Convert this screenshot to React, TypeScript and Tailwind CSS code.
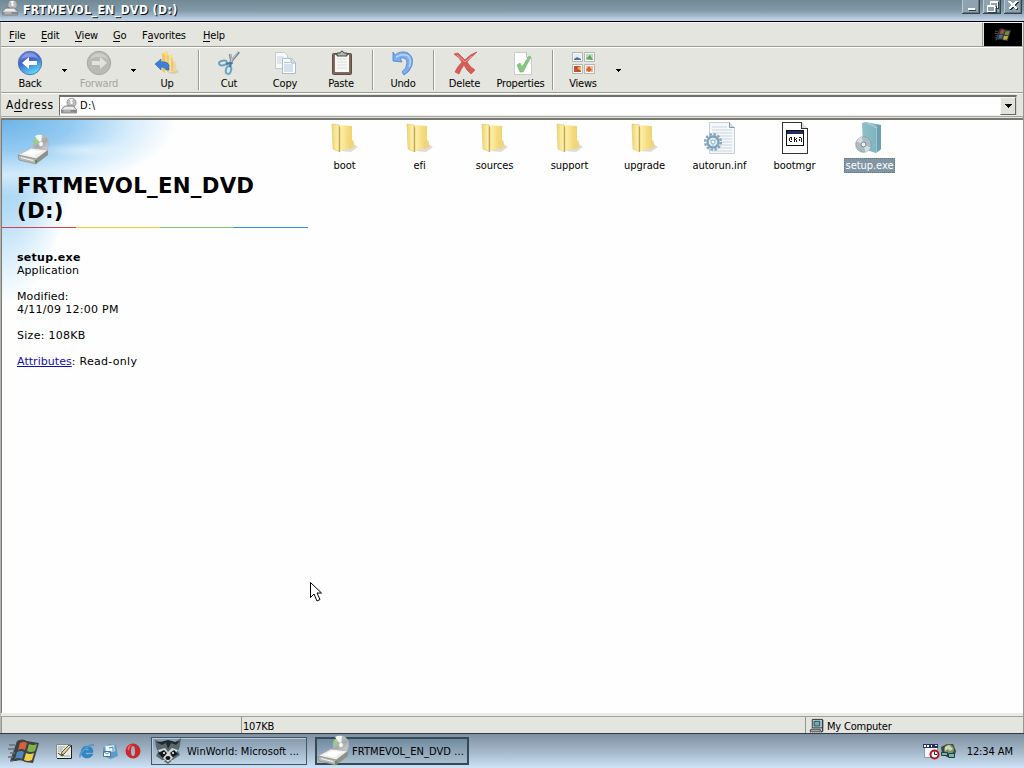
import React from "react";

interface IconProps {
  className?: string;
}

interface ToolItem {
  id: string;
  text?: string;
  icon?: React.ReactNode;
  kind: "button" | "arrow" | "separator";
  width: string;
  disabled?: boolean;
}

interface FileItem {
  id: string;
  name: string;
  icon: React.ReactNode;
  selected?: boolean;
}

const DriveIcon = ({ className }: IconProps) => (
  <svg viewBox="0 0 32 32" className={className}>
    <defs>
      <linearGradient id="disc" x1="0" y1="0" x2="1" y2="1">
        <stop offset="0" stopColor="#d8dcd8" />
        <stop offset=".5" stopColor="#a4a8a8" />
        <stop offset="1" stopColor="#e4e6e6" />
      </linearGradient>
    </defs>
    <ellipse cx="24" cy="10" rx="7.6" ry="9" fill="url(#disc)" stroke="#b2b8ba" strokeWidth=".7" transform="rotate(12 24 10)" />
    <path d="M24 10 18 2a9 9 0 0 1 7-1z" fill="#f5f7f5" />
    <path d="M24 10 16 9l1-5z" fill="#8ed46f" opacity=".8" />
    <ellipse cx="24" cy="10" rx="2.3" ry="2.6" fill="#f8f8f8" stroke="#aaa" strokeWidth=".6" />
    <path d="M1 21 14 14l17 2-12 9z" fill="#efefed" stroke="#b0b0ae" strokeWidth=".7" />
    <path d="m6 20 9-4 10 1-8 5z" fill="#fff" />
    <path d="m1 21 18 4v5L2 26z" fill="#b7b8b5" stroke="#8a8a86" strokeWidth=".7" />
    <path d="m19 25 12-9v5l-12 9z" fill="#8d908b" />
    <path d="m4 23.500 12 3" stroke="#f3f3f3" strokeWidth="1.200" />
    <path d="M19 26v3" stroke="#4d8a3b" strokeWidth="1.500" />
  </svg>
);

const SmallDriveIcon = ({ className }: IconProps) => (
  <svg viewBox="0 0 16 16" className={className}>
    <circle cx="10.5" cy="4.800" r="4.600" fill="#bbbdbd" stroke="#858789" strokeWidth=".7" />
    <path d="M10.500 4.800 8 1h4z" fill="#f4f4f4" />
    <circle cx="10.500" cy="4.800" r="1.200" fill="#fff" />
    <path d="M3.500 8h9l3 3.500v3.500H.5v-3.500z" fill="#d0d0ce" stroke="#737575" strokeWidth=".8" />
    <path d="M4 9h8l1.500 2h-11z" fill="#ececea" />
    <path d="M1 12h14v2.500H1z" fill="#868a8b" />
    <path d="M2.500 13h7" stroke="#eee" strokeWidth=".8" />
  </svg>
);

const RoundArrowIcon = ({ forward }: { forward?: boolean }) => (
  <svg viewBox="0 0 26 26" className="size-[26px]">
    <defs>
      <linearGradient id="backBall" x1="0" y1="0" x2=".4" y2="1">
        <stop offset="0" stopColor="#8288df" />
        <stop offset=".5" stopColor="#3f66c9" />
        <stop offset="1" stopColor="#5bd2f6" />
      </linearGradient>
    </defs>
    <circle cx="13" cy="13" r="11.700" fill={forward ? "#b9b9b6" : "url(#backBall)"} stroke={forward ? "#a8a8a5" : "#5675b2"} strokeWidth="1" />
    <path d="M4 9a10 10 0 0 1 18 0q-9-4-18 0z" fill="#fff" opacity=".28" />
    <path d="m5 13 7-6v4h8v4h-8v4z" fill={forward ? "#e2e2dd" : "#fff"} transform={forward ? "rotate(180 13 13)" : undefined} />
  </svg>
);

const UpIcon = () => (
  <svg viewBox="0 0 26 26" className="size-[26px]">
    <path d="m20 17 5 5-5 2-6-1z" fill="#c9b8a0" opacity=".6" />
    <path d="m8 3 6-2v17l-4 4-2-2z" fill="#fadb8a" />
    <path d="m8 3 3 2v18l-3-2z" fill="#f2c565" />
    <path d="m14 6 5-2v18h-5z" fill="#fbe094" />
    <path d="m18 12 3-1 2 10-5 1z" fill="#f0d49a" />
    <path d="M14 5v17M18 8v13" stroke="#d9a95c" strokeWidth=".8" />
    <path d="m1 14 6-5v3q6-1 8 3v5h-3q-1-3-5-3v3z" fill="#3f80d6" stroke="#2c64b4" strokeWidth=".6" />
  </svg>
);

const CutIcon = () => (
  <svg viewBox="0 0 26 26" className="size-[26px]" fill="none">
    <path d="m23 2-10 12M14 4l2 10" stroke="#7a8791" strokeWidth="2.600" />
    <path d="m22 2-9 12M14.500 4l1.500 9" stroke="#c6d0d6" strokeWidth="1" />
    <ellipse cx="7" cy="13" rx="4" ry="2.300" transform="rotate(-12 7 13)" stroke="#6d9fbe" strokeWidth="2" />
    <ellipse cx="12.500" cy="20" rx="2.600" ry="4" transform="rotate(15 12.500 20)" stroke="#6ba5c9" strokeWidth="2" />
    <path d="m10 14 5-1-1 4" stroke="#44789f" strokeWidth="2" />
  </svg>
);

const CopyIcon = () => (
  <svg viewBox="0 0 26 26" className="size-[26px]">
    <path d="M3.500 2.500h9l3 3v13h-12z" fill="#f8f9fa" stroke="#c3cad0" />
    <path d="M5 7h7M5 9h5M5 11h5M5 13h5" stroke="#ccd2d8" />
    <path d="M10.500 8.500h9l4 4v11h-13z" fill="#fbfcfd" stroke="#adbbc7" />
    <path d="M19 8.500V13h4.500" fill="#dce7ee" stroke="#9eb3c3" />
    <path d="M12 12.500h6M12 15h9M12 17h9M12 19h9M12 21h9" stroke="#aec5d8" />
  </svg>
);

const PasteIcon = () => (
  <svg viewBox="0 0 26 26" className="size-[26px]">
    <rect x="4.500" y="3.500" width="19" height="21" rx="1" fill="#806a5e" stroke="#5b4d46" />
    <path d="M7 5h14v17H7z" fill="#f8f8f6" />
    <path d="M9 9h10M9 12h10M9 15h10M9 18h10" stroke="#dcdcdc" />
    <path d="M9 5V3h3q2-4 4 0h3v3H9z" fill="#b2b4b0" stroke="#434847" />
  </svg>
);

const UndoIcon = () => (
  <svg viewBox="0 0 26 26" className="size-[26px]">
    <path d="m3 2 2 3q6-5 13-2 6 4 4 12-2 7-8 10l-2-3q5-4 5-9 0-6-7-5l2 4-9-1z" fill="#7caded" stroke="#5189d6" strokeWidth=".9" />
    <path d="M6 7q7-4 12-1 4 4 1 11" fill="none" stroke="#bad5fa" strokeWidth="1.500" />
  </svg>
);

const DeleteIcon = () => (
  <svg viewBox="0 0 26 26" className="size-[26px]">
    <path d="m2 4 4-1 7 7Q18 4 25 2q-6 5-10 10 3 5 8 8l-4 4q-5-4-7-9-3 4-5 9l-4-2q2-5 7-10-3-5-8-8z" fill="#d65c58" stroke="#c2524d" strokeWidth=".7" />
    <path d="m5 5 8 7 7-6" fill="none" stroke="#efa19a" strokeWidth="1" />
  </svg>
);

const PropertiesIcon = () => (
  <svg viewBox="0 0 26 26" className="size-[26px]">
    <path d="M6.500 2.500h12l5 5v17h-17z" fill="#fff" stroke="#c9cec9" />
    <path d="M18.500 2.500v5h5" fill="#e6ece6" stroke="#b9c1b9" />
    <path d="m9 15 3-2 2 4 7-11 2 1-8 15h-3z" fill="#86c781" stroke="#6bb266" strokeWidth=".6" />
  </svg>
);

const ViewsIcon = () => (
  <svg viewBox="0 0 26 26" className="size-[26px]">
    <path d="M2.500 2.500h10v9h-10zM14.500 2.500h10v9h-10zM2.500 14.500h10v9h-10zM14.500 14.500h10v9h-10z" fill="#f5f5f3" stroke="#b5b5b5" />
    <path d="M4 4h7v5H4z" fill="#e3edf6" />
    <path d="m4 9 3-2 4 2v1H4z" fill="#4f739f" />
    <path d="M16 4h7v6h-7z" fill="#b7dcb4" />
    <path d="m16 9 4-4 3 5z" fill="#5fa06b" />
    <path d="M4 16h7v6H4z" fill="#c04f35" />
    <path d="m7 18 4-2v5z" fill="#efb54c" />
    <path d="M16 16h7v6h-7z" fill="#edbf85" />
    <path d="m16 20 3-4 3 4-3 2z" fill="#d1604d" />
  </svg>
);

const FolderIcon = () => (
  <svg viewBox="0 0 32 32" className="size-8">
    <defs>
      <linearGradient id="folderFront">
        <stop offset="0" stopColor="#f0d46f" />
        <stop offset=".7" stopColor="#fdf0ae" />
        <stop offset="1" stopColor="#d8b755" />
      </linearGradient>
      <linearGradient id="folderBack">
        <stop offset="0" stopColor="#fff3ae" />
        <stop offset="1" stopColor="#f0d36e" />
      </linearGradient>
    </defs>
    <path d="m21 20 8 5-7 5-10-1z" fill="#a19d9c" opacity=".35" />
    <path d="m10 3 13 1v22l-13 3z" fill="url(#folderBack)" />
    <path d="M18 5v21M20 5v21" stroke="#f4d97a" />
    <path d="m20 20 4-2 2 7-6 2z" fill="#efd57f" />
    <path d="m3 2 7 1 1 3v24l-7-3z" fill="url(#folderFront)" stroke="#dec674" strokeWidth=".6" />
    <path d="M10.500 5v25" stroke="#b99f52" strokeWidth=".8" />
  </svg>
);

const InfIcon = () => (
  <svg viewBox="0 0 32 32" className="size-8">
    <path d="M5.500.500h20l5 5v26h-25z" fill="#f4f8fb" stroke="#c6d0d7" />
    <path d="M25.500.500v5h5" fill="#d8e1e8" stroke="#8a969f" />
    <path d="M8 5h15M8 8h20M8 11h20M8 14h20M8 17h20M8 20h20M8 23h20M8 26h20M8 29h20" stroke="#cbd6de" />
    <circle cx="9" cy="20" r="7.800" fill="none" stroke="#86a7bd" strokeWidth="2.500" strokeDasharray="2.500 1.600" />
    <circle cx="9" cy="20" r="5.500" fill="#e3f0f7" stroke="#7da2bb" strokeWidth="2.300" />
    <path d="m9 20-4-3M9 20l4-3M9 20v5" stroke="#a5c2d3" />
    <circle cx="9" cy="20" r="2" fill="#fff" stroke="#8bb0c8" />
  </svg>
);

const BootIcon = () => (
  <svg viewBox="0 0 32 32" className="size-8" shapeRendering="crispEdges">
    <path d="M3.500.500h19l6 6v25h-25z" fill="#fff" stroke="#333" />
    <path d="M22.500.500v6h6" fill="#ddd" stroke="#333" />
    <path d="M7.500 8.500h17v15h-17z" fill="#fff" stroke="#111" />
    <path d="M8 9h16v3H8z" fill="#202b67" />
    <path d="M11 15h2v1h-2zM10 16h1v3h-1zM12 16h1v2h-1zM11 19h2v1h-2zM15 15h1v5h-1zM17 16h1v1h-1zM16 17h1v1h-1zM17 18h1v2h-1zM20 15h2v1h-2zM22 16h1v4h-1zM20 17h1v2h-1z" fill="#111" />
  </svg>
);

const SetupIcon = () => (
  <svg viewBox="0 0 32 32" className="size-8">
    <defs>
      <linearGradient id="setupBox">
        <stop offset="0" stopColor="#8ec0ca" />
        <stop offset=".75" stopColor="#80b4be" />
        <stop offset="1" stopColor="#58909c" />
      </linearGradient>
    </defs>
    <path d="m8 1 4-1 15 3v24l-5 4-13-4z" fill="url(#setupBox)" />
    <path d="m12 0 11 6v24" fill="none" stroke="#a8d6dd" strokeWidth="1.200" />
    <path d="m23 6 4-3v24l-4 3z" fill="#6ba0ac" />
    <circle cx="9.500" cy="22.500" r="7.800" fill="#acbac3" stroke="#8598a4" strokeWidth=".7" />
    <path d="m9.500 22.500-7-3a8 8 0 0 1 5-5zM9.500 22.500l7 3a8 8 0 0 1-5 5z" fill="#d6dce0" />
    <circle cx="9.500" cy="22.500" r="2.400" fill="#eef1f3" stroke="#7c8990" />
  </svg>
);

const WindowsFlag = ({ className }: IconProps) => (
  <svg viewBox="0 0 34 28" className={className}>
    <path d="M9 4q5-3 10 0l12 2-6 20-8-1q-4-3-9-1l-6 0z" fill="#3d4244" />
    <path d="M1 8h6M0 12h7M2 16h5M0 20h5M2 24h3" stroke="#667078" strokeWidth="1.500" />
    <path d="M12 6q4-2 7 0l-2 7q-4-2-7 0z" fill="#d9603c" />
    <path d="M21 7q4 2 8 0l-2 7q-4 2-8 0z" fill="#7fb24d" />
    <path d="M9 15q4-2 7 0l-2 7q-4-2-7 0z" fill="#4f86bb" />
    <path d="M18 16q4 2 8 0l-2 7q-4 2-8 0z" fill="#ecd04c" />
  </svg>
);

const RaccoonIcon = () => (
  <svg viewBox="0 0 28 28" className="size-7 shrink-0">
    <path d="m1 3 7 2q6-3 13 0l6-4-1 8-2 5 2 4-6 4-6 5-6-4-6-4 2-4-2-5z" fill="#59686f" />
    <path d="m2 5 6 3 4-2 2 6 3-6 5 2 4-4-5 1-7-2-8 2z" fill="#20292f" />
    <path d="m4 13 7-2 3 4 4-4 6 2-2 3-8 2-8-2z" fill="#cdd6d8" />
    <path d="m4 16 6-3 4 4-5 4zM16 16l4-3 4 4-5 3z" fill="#15191c" />
    <path d="m9 21 5-6 5 6-5 4z" fill="#d5dadb" />
    <circle cx="10" cy="16" r="1" fill="#fff" />
    <circle cx="19" cy="16" r="1" fill="#fff" />
    <ellipse cx="14" cy="21" rx="2.500" ry="2" fill="#111" />
    <path d="m8 24 3-1M20 24l-3-1" stroke="#c9d3d5" />
  </svg>
);

const NotePadIcon = () => (
  <svg viewBox="0 0 16 16" className="size-4">
    <path d="M.5 1.500h15v14H.5z" fill="#e9ece0" />
    <path d="M.5 15V1.500H15" fill="none" stroke="#7c8a92" />
    <path d="M15.500 2v13.500H1" fill="none" stroke="#182028" />
    <path d="M2 4h7M2 6h5M2 8h4M8 13h6" stroke="#a1aaa0" />
    <path d="m5 12 1-3 7-7 2 1-7 8z" fill="#e2d492" stroke="#333" strokeWidth=".8" />
    <path d="m2 10 4 3 2-1" fill="none" stroke="#333" />
  </svg>
);

const ExplorerIcon = () => (
  <svg viewBox="0 0 16 16" className="size-4">
    <path fillRule="evenodd" d="M14 9.500H6q1 3 4 1.500h4q-2 4.500-7 4-5-1-5-6 1-6 6-6 6 0 6 6.500zM6 7.500h4.500q-2-4-4.500 0" fill="#2f88c8" stroke="#1c6dad" strokeWidth=".4" />
    <path d="M1 14.500Q-1 10 7 4q8-5 8-1-1-2-7 2-7 6-7 9.500z" fill="#5ba7db" stroke="#3a88c2" strokeWidth=".5" />
  </svg>
);

const OutlookIcon = () => (
  <svg viewBox="0 0 16 16" className="size-4">
    <path d="m1 5 6-4 7 1 2 11-7 3-8-3z" fill="#6098c8" />
    <path d="m3 3 9-1 1 6-9 2z" fill="#eff6fa" stroke="#90bad6" strokeWidth=".6" />
    <path d="M1.500 8.500h7v5h-7z" fill="#fff" stroke="#4375a7" />
    <path d="m2 9 3 2 3-2M7 5l4-1v4" fill="none" stroke="#3f80b5" />
  </svg>
);

const OperaIcon = () => (
  <svg viewBox="0 0 16 16" className="size-4">
    <path fillRule="evenodd" d="M8 .500A7.500 7.500 0 1 0 8 15.500 7.500 7.500 0 1 0 8 .500M8 3q2 0 2 5t-2 5-2-5 2-5" fill="#cb2a2c" />
    <path d="M2.500 6Q3 2 7 1.500 4 4 4 8z" fill="#f36a68" />
  </svg>
);

const ComputerIcon = () => (
  <svg viewBox="0 0 16 16" className="size-[15px]">
    <path d="M3.500 1.500h11v9h-11z" fill="#c3cbc9" stroke="#283235" />
    <path d="M5.500 3.500h6v5h-6z" fill="#67aeba" stroke="#234a54" />
    <path d="M14.500 2v12l-2 1" fill="none" stroke="#28444b" strokeWidth="1.500" />
    <path d="M2 12h10v2H1z" fill="#e3e4dc" stroke="#30393a" />
    <path d="M1 15h12" stroke="#30393a" strokeDasharray="1 1" />
  </svg>
);

const TrayCalendarIcon = () => (
  <svg viewBox="0 0 17 17" className="size-[17px]">
    <path d="M1.500 2.500h13v12h-13z" fill="#f6f7fa" stroke="#9298aa" />
    <path d="M0 1h15v4H0z" fill="#29315e" />
    <path d="M1 2h2v2H1zM4 2h2v2H4zM8 2h1v2H8zM12 2h2v1h-2z" fill="#fff" />
    <circle cx="11.500" cy="11.500" r="4" fill="#fff" stroke="#aa1820" strokeWidth="2" />
    <path d="M11.500 8.500v3h2.500" fill="none" stroke="#222" />
  </svg>
);

const TrayNetworkIcon = () => (
  <svg viewBox="0 0 17 17" className="size-[17px]">
    <path d="m1 4 6-3 6 0 3 7-2 7-7-1-5-3z" fill="#3c4640" />
    <circle cx="9" cy="6.500" r="5" fill="#789568" />
    <path d="m5 4 4-2 4 4-3 2-2-2-3 2z" fill="#d4d6b2" />
    <path d="M1.500 9.500h6v3h-6zM8.500 10.500h6v4h-6z" fill="#6eb4b8" stroke="#293c40" />
  </svg>
);

const toolItems: ToolItem[] = [
  { id: "back", text: "Back", icon: <RoundArrowIcon />, kind: "button", width: "w-[58px]" },
  { id: "backMenu", kind: "arrow", width: "w-[11px]" },
  { id: "forward", text: "Forward", icon: <RoundArrowIcon forward />, kind: "button", width: "w-[58px]", disabled: true },
  { id: "forwardMenu", kind: "arrow", width: "w-[10px]" },
  { id: "up", text: "Up", icon: <UpIcon />, kind: "button", width: "w-[58px]" },
  { id: "sep1", kind: "separator", width: "w-[5px]" },
  { id: "cut", text: "Cut", icon: <CutIcon />, kind: "button", width: "w-14" },
  { id: "copy", text: "Copy", icon: <CopyIcon />, kind: "button", width: "w-14" },
  { id: "paste", text: "Paste", icon: <PasteIcon />, kind: "button", width: "w-14" },
  { id: "sep2", kind: "separator", width: "w-[7px]" },
  { id: "undo", text: "Undo", icon: <UndoIcon />, kind: "button", width: "w-[54px]" },
  { id: "sep3", kind: "separator", width: "w-[8px]" },
  { id: "delete", text: "Delete", icon: <DeleteIcon />, kind: "button", width: "w-[53px]" },
  { id: "properties", text: "Properties", icon: <PropertiesIcon />, kind: "button", width: "w-[59px]" },
  { id: "sep4", kind: "separator", width: "w-[6px]" },
  { id: "views", text: "Views", icon: <ViewsIcon />, kind: "button", width: "w-[54px]" },
  { id: "viewsMenu", kind: "arrow", width: "w-4" },
];

const files: FileItem[] = [
  { id: "1", name: "boot", icon: <FolderIcon /> },
  { id: "2", name: "efi", icon: <FolderIcon /> },
  { id: "3", name: "sources", icon: <FolderIcon /> },
  { id: "4", name: "support", icon: <FolderIcon /> },
  { id: "5", name: "upgrade", icon: <FolderIcon /> },
  { id: "6", name: "autorun.inf", icon: <InfIcon /> },
  { id: "7", name: "bootmgr", icon: <BootIcon /> },
  { id: "8", name: "setup.exe", icon: <SetupIcon />, selected: true },
];

const menuItems = [
  { before: "", hotkey: "F", after: "ile", width: "w-[32px]" },
  { before: "", hotkey: "E", after: "dit", width: "w-[34px]" },
  { before: "", hotkey: "V", after: "iew", width: "w-[38px]" },
  { before: "", hotkey: "G", after: "o", width: "w-[29px]" },
  { before: "F", hotkey: "a", after: "vorites", width: "w-[61px]" },
  { before: "", hotkey: "H", after: "elp", width: "w-[40px]" },
];

const Hotkey = ({ children }: { children: string }) => (
  <span className="inline-block border-b border-black leading-[11px]">{children}</span>
);

const DownArrow = () => (
  <svg viewBox="0 0 5 3" className="h-[3px] w-[5px]" shapeRendering="crispEdges">
    <path d="M0 0h5L2.500 3z" fill="#000" />
  </svg>
);

const TitleBar = () => (
  <header className="flex h-[22px] shrink-0 items-start justify-between border-b border-black bg-linear-to-b from-[#728995] via-[#8299a7] to-[#c5d9ef]">
    <div className="flex items-start gap-[5px] pl-[2px]">
      <SmallDriveIcon className="size-4" />
      <span className="text-[12px] leading-[20px] font-bold tracking-[0.47px] whitespace-nowrap text-white [text-shadow:1px_1px_0_#111]">FRTMEVOL_EN_DVD (D:)</span>
    </div>
    <div className="flex gap-[3px] pr-[2px]">
      {["min", "restore", "close"].map((name) => (
        <div key={name} className="flex h-[14px] w-[18px] items-center justify-center border-r border-b border-[#34434e] bg-[#8fa2af] shadow-[inset_1px_0_#b9c8d2,inset_-1px_-1px_#657783]">
          <svg viewBox="0 0 14 12" className="h-3 w-[14px]" fill="none" shapeRendering="crispEdges">
            {name === "min" && (
              <>
                <path d="M4 8h7" stroke="#f4f8fa" strokeWidth="2" />
                <path d="M5 9.500h7" stroke="#33414b" />
              </>
            )}
            {name === "restore" && (
              <>
                <path d="M5.500 4V.500h7v6H10M5 1.500h8" stroke="#fff" />
                <path d="M2.500 4.500h7v6h-7zM2 5.500h8" stroke="#fff" />
                <path d="M3 11.500h8V5M11 7.500h2.500V1" stroke="#33414b" />
              </>
            )}
            {name === "close" && (
              <>
                <path d="m4 1 8 8M12 1 4 9" stroke="#263640" strokeWidth="2" />
                <path d="m3 0 8 8M11 0 3 8" stroke="#fff" strokeWidth="2" />
              </>
            )}
          </svg>
        </div>
      ))}
    </div>
  </header>
);

const MenuBar = () => (
  <nav className="flex h-[25px] shrink-0 justify-between border-t border-b border-t-[#f5f5f1] border-b-[#9b9c96] pr-px">
    <div className="flex grow items-center border-r border-[#9b9c96] pt-px pl-[8px]">
      {menuItems.map((item) => (
        <span key={item.hotkey} className={`${item.width} whitespace-nowrap`}>
          {item.before}
          <Hotkey>{item.hotkey}</Hotkey>
          {item.after}
        </span>
      ))}
    </div>
    <div className="ml-px flex h-[23px] w-[38px] items-center justify-center bg-black">
      <WindowsFlag className="h-[15px] w-[19px] opacity-80" />
    </div>
  </nav>
);

const Toolbar = () => (
  <div className="flex h-[46px] shrink-0 border-t border-b border-t-white border-b-[#9b9c96]">
    {toolItems.map((item) => {
      if (item.kind === "separator") {
        return (
          <div key={item.id} className={`${item.width} flex shrink-0 justify-center py-[2px]`}>
            <div className="w-[2px] border-r border-l border-r-white border-l-[#999a94]" />
          </div>
        );
      }
      if (item.kind === "arrow") {
        return (
          <div key={item.id} className={`${item.width} flex shrink-0 justify-center pt-[21px]`}>
            <DownArrow />
          </div>
        );
      }
      return (
        <div key={item.id} className={`${item.width} flex shrink-0 flex-col items-center pt-[2px] ${item.disabled ? "text-[#a5a59f]" : ""}`}>
          {item.icon}
          <span className="mt-px leading-[13px] whitespace-nowrap">{item.text}</span>
        </div>
      );
    })}
  </div>
);

const AddressBar = () => (
  <div className="flex h-[24px] shrink-0 items-center border-t border-b border-t-white border-b-[#a5a6a0] pr-[6px] pl-[5px]">
    <span className="w-[53px] shrink-0 text-[12px] tracking-[0.65px]">
      A<Hotkey>d</Hotkey>dress
    </span>
    <div className="flex h-[21px] grow items-center border border-t-2 border-[#6e6f6a] border-r-[#d2d2cc] border-b-[#eee] bg-white pl-[1px]">
      <SmallDriveIcon className="size-4" />
      <span className="grow pl-[3px] tracking-[0.4px]">D:\</span>
      <div className="flex h-[18px] w-4 items-center justify-center border border-t-[#f6f6f3] border-r-[#666] border-b-[#666] border-l-[#f6f6f3] bg-[#e1e2dc]">
        <svg viewBox="0 0 7 4" className="h-1 w-[7px]" shapeRendering="crispEdges">
          <path d="M0 0h7L3.500 4z" />
        </svg>
      </div>
    </div>
  </div>
);

const InfoPanel = () => (
  <aside className="w-[306px] shrink-0 bg-[radial-gradient(ellipse_50px_8px_at_85px_30px,#e6f4fdaa_0%,transparent_100%),radial-gradient(ellipse_175px_76px_at_0_0,#6db4e8_0%,#93caf1_40%,#d3ebfb_72%,transparent_100%),radial-gradient(ellipse_75px_185px_at_0_0,#8dc8ee_0%,#b5dcf5_50%,#e2f2fc_80%,transparent_100%)] font-['DejaVu_Sans',Verdana,sans-serif] text-[11px] leading-[13px] tracking-[0.28px] [font-stretch:normal]">
    <div className="h-[107px] pt-[14px] pl-[15px]">
      <DriveIcon className="size-8" />
      <h1 className="mt-[7px] text-[21.300px] leading-[25px] font-bold tracking-[0.25px] whitespace-nowrap">
        FRTMEVOL_EN_DVD
        <br />
        (D:)
      </h1>
    </div>
    <div className="flex h-px">
      <div className="w-[74px] bg-[#d2414c]" />
      <div className="w-[84px] bg-[#ecd03c]" />
      <div className="w-[74px] bg-[#86c06c]" />
      <div className="grow bg-[#2f93cf]" />
    </div>
    <div className="pt-[23px] pl-[15px]">
      <p className="font-bold">setup.exe</p>
      <p className="tracking-[0.05px]">Application</p>
      <p className="mt-[13px] tracking-[0.1px]">Modified:</p>
      <p>4/11/09 12:00 PM</p>
      <p className="mt-[13px]">Size: 108KB</p>
      <p className="mt-[13px]">
        <a className="tracking-[0.05px] text-[#1010a8] underline">Attributes</a>: Read-only
      </p>
    </div>
  </aside>
);

const StatusBar = () => (
  <footer className="flex h-[17px] shrink-0 items-stretch gap-[2px] border-t border-[#a1a29b]">
    <div className="w-[238px] border-l border-[#96978f]" />
    <div className="w-[562px] border-l border-[#96978f] pt-px pl-px leading-[17px]">107KB</div>
    <div className="flex grow items-center gap-[3px] border-l border-[#96978f] pl-[3px]">
      <ComputerIcon />
      <span className="pt-[2px]">My Computer</span>
    </div>
  </footer>
);

const Taskbar = () => (
  <div className="flex h-[35px] shrink-0 items-center border-t border-[#303942] bg-linear-to-b from-[#7f91a1] via-[#a2b6c8] to-[#cee2f8]">
    <div className="flex w-[56px] items-center pl-[8px]">
      <WindowsFlag className="h-7 w-[34px]" />
    </div>
    <div className="flex w-[95px] items-center gap-[7px]">
      <NotePadIcon />
      <ExplorerIcon />
      <OutlookIcon />
      <OperaIcon />
    </div>
    <div className="flex h-7 w-[156px] items-center gap-[5px] border border-[#405669] bg-linear-to-b from-[#8398ab] to-[#c1d5e9] pl-[2px] shadow-[inset_1px_1px_#bacbd8]">
      <RaccoonIcon />
      <span className="tracking-[0.05px] whitespace-nowrap">WinWorld: Microsoft ...</span>
    </div>
    <div className="ml-2 flex h-7 w-[154px] items-center gap-[3px] border-2 border-[#34495a] bg-linear-to-b from-[#718a9e] to-[#a9bfd0]">
      <DriveIcon className="size-8 shrink-0" />
      <span className="tracking-[0.08px] whitespace-nowrap">FRTMEVOL_EN_DVD ...</span>
    </div>
    <div className="flex grow items-center justify-end pr-[11px]">
      <TrayCalendarIcon />
      <TrayNetworkIcon />
      <span className="ml-[10px] tracking-[-0.08px] whitespace-nowrap">12:34 AM</span>
    </div>
  </div>
);

export default function App() {
  return (
    <div className="relative flex h-[768px] w-[1024px] flex-col overflow-hidden bg-[#e4e5df] font-['DejaVu_Sans_Condensed','DejaVu_Sans',Tahoma,sans-serif] text-[11px] leading-[13px] tracking-[-0.2px] text-black [font-stretch:condensed]">
      <TitleBar />
      <div className="flex min-h-0 grow flex-col border-r border-l border-r-[#969790] border-l-[#b5b6b0]">
        <MenuBar />
        <Toolbar />
        <AddressBar />
        <main className="mt-px flex min-h-0 grow border-t-2 border-l border-[#777872] bg-[#fefefe]">
          <InfoPanel />
          <section className="-ml-px flex grow pt-[2px]">
            {files.map((file) => (
              <div key={file.id} className="flex w-[75px] shrink-0 flex-col items-center">
                {file.icon}
                <span className={`mt-1 h-[15px] px-[2px] pt-px leading-[14px] tracking-[-0.05px] whitespace-nowrap ${file.selected ? "bg-[#8295a4] text-white outline-1 -outline-offset-1 outline-dotted outline-[#647785]" : ""}`}>
                  {file.name}
                </span>
              </div>
            ))}
          </section>
        </main>
        <div className="h-[3px] shrink-0 bg-[#e9eae5]" />
        <StatusBar />
      </div>
      <Taskbar />

      {/* Mouse pointer */}
      <svg viewBox="0 0 12 20" className="absolute top-[582px] left-[310px] h-5 w-3">
        <path d="M.5.500v15l3.500-3.500 3 7 3-1.500L7 11h4.500z" fill="#fff" stroke="#000" />
      </svg>
    </div>
  );
}
